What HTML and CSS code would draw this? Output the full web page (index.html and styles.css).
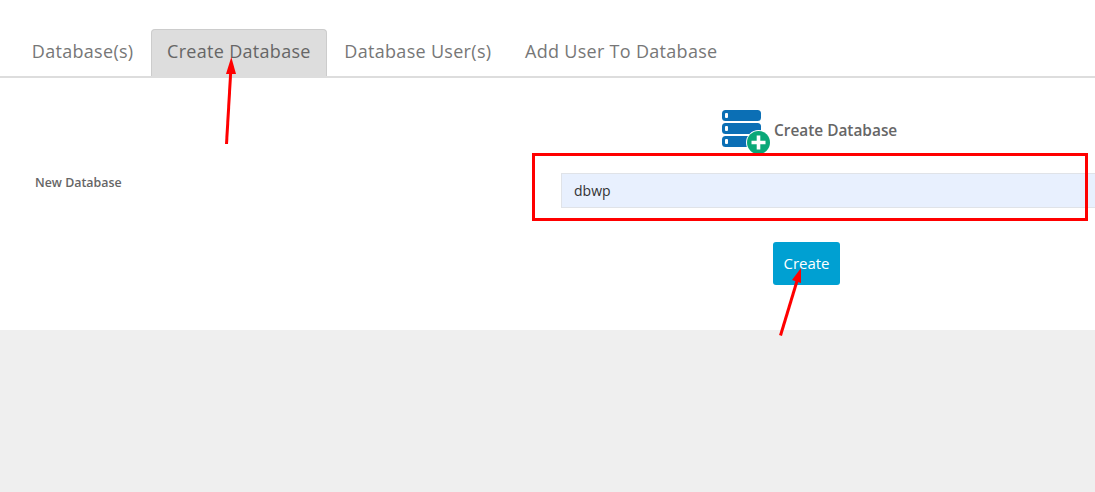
FILE: index.html
```html
<!DOCTYPE html>
<html lang="en">
<head>
<meta charset="utf-8">
<title>Create Database</title>
<link rel="stylesheet" href="styles.css">
</head>
<body>
<main class="panel">
  <nav class="tabs">
    <a class="tab">Database(s)</a>
    <a class="tab active">Create Database</a>
    <a class="tab">Database User(s)</a>
    <a class="tab">Add User To Database</a>
  </nav>
  <section class="form">
    <div class="heading">
      <svg class="db-icon" width="50" height="46" viewBox="0 0 50 46">
        <rect x="1" y="0" width="39" height="11" rx="3.5" fill="#0b6fb5"/>
        <rect x="1" y="13" width="39" height="11" rx="3.5" fill="#0b6fb5"/>
        <rect x="1" y="26" width="39" height="11" rx="3.5" fill="#0b6fb5"/>
        <rect x="4" y="3" width="3" height="5" rx="1" fill="#fff"/>
        <rect x="4" y="16" width="3" height="5" rx="1" fill="#fff"/>
        <rect x="4" y="29" width="3" height="5" rx="1" fill="#fff"/>
        <circle cx="37.500" cy="32.500" r="12.500" fill="#fff"/>
        <circle cx="37.500" cy="32.500" r="11.500" fill="#0aa878"/>
        <path d="M37.500 25.500v14M30.500 32.500h14" stroke="#fff" stroke-width="3.600" fill="none"/>
      </svg>
      <h2 class="title">Create Database</h2>
    </div>
    <div class="field">
      <label class="label" for="db">New Database</label>
      <input class="input" id="db" type="text" value="dbwp">
    </div>
    <div class="actions">
      <button class="btn" type="button">Create</button>
    </div>
  </section>
</main>
<svg class="marks" width="1095" height="492" viewBox="0 0 1095 492">
  <rect x="533.500" y="154.500" width="553" height="65" fill="none" stroke="#f00" stroke-width="3"/>
  <path d="M226.500 144L230.700 72" stroke="#f00" stroke-width="3" fill="none"/>
  <path d="M231.300 57L226 74L236 74Z" fill="#f00"/>
  <path d="M780.500 335.500L797 281" stroke="#f00" stroke-width="3" fill="none"/>
  <path d="M801 268L792 280L801 283Z" fill="#f00"/>
</svg>
</body>
</html>
```

FILE: styles.css
```css
html, body {
  margin: 0;
  padding: 0;
}
body {
  width: 1095px;
  height: 492px;
  overflow: hidden;
  background: #efefef;
  font-family: "Open Sans", sans-serif;
  position: relative;
}
.panel {
  background: #fff;
  height: 330px;
  box-sizing: border-box;
  padding-top: 29px;
  overflow: hidden;
}
.tabs {
  display: flex;
  height: 47px;
  padding-left: 16px;
  gap: 2px;
  border-bottom: 2px solid #ddd;
}
.tab {
  box-sizing: border-box;
  height: 47px;
  padding: 8px 14.8px 0;
  font-size: 18px;
  line-height: 26px;
  letter-spacing: 0.3px;
  color: #777;
  border: 1px solid transparent;
  border-bottom: 0;
  border-radius: 4px 4px 0 0;
  white-space: nowrap;
}
.tab.active {
  background: #ddd;
  border-color: #ccc;
  color: #666;
}
.form {
  position: relative;
}
.heading {
  display: flex;
  align-items: center;
  margin-left: 721px;
  padding-top: 32px;
  height: 46px;
}
.db-icon {
  flex: none;
  margin-right: 3px;
}
.title {
  margin: 0;
  font-size: 15.4px;
  font-weight: 600;
  color: #666;
  line-height: 24px;
  position: relative;
  top: -2px;
}
.field {
  display: flex;
  align-items: flex-start;
  margin-top: 17px;
  padding-left: 35px;
}
.label {
  width: 526px;
  flex: none;
  font-size: 12.4px;
  font-weight: 600;
  color: #666;
  line-height: 20px;
}
.input {
  flex: none;
  width: 560px;
  height: 35px;
  box-sizing: border-box;
  background: #e8f0fe;
  border: 1px solid #e0e3e8;
  padding: 0 12px;
  font: 14px "Open Sans", sans-serif;
  color: #333;
  outline: 0;
}
.actions {
  margin-top: 34px;
  padding-left: 773px;
}
.btn {
  width: 67px;
  height: 43px;
  padding: 0 0 2px;
  border: 0;
  border-radius: 3px;
  background: #00a0d2;
  color: #fff;
  font: 15px "Open Sans", sans-serif;
}
.marks {
  position: absolute;
  left: 0;
  top: 0;
  pointer-events: none;
}
```
